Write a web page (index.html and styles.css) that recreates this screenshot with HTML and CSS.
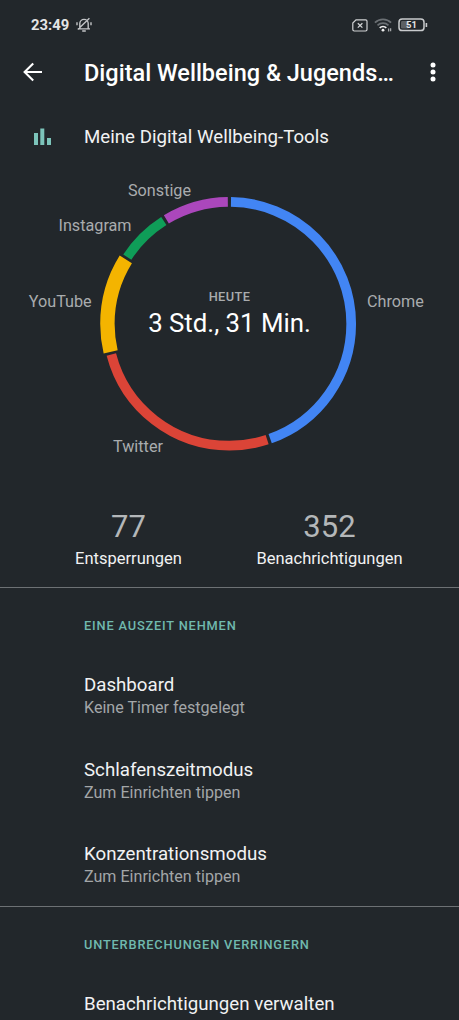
FILE: index.html
```html
<!DOCTYPE html>
<html lang="de">
<head>
<meta charset="utf-8">
<title>Digital Wellbeing</title>
<link rel="stylesheet" href="styles.css">
</head>
<body>
<div class="screen">
  <div class="status">
    <span class="time">23:49</span>
    <svg class="bell" width="16" height="16" viewBox="0 0 16 16" fill="none" stroke="#c3c5c7" stroke-width="1.4">
      <path d="M3.8 11.6V6.6a4.2 4.2 0 0 1 8.4 0v5M2 11.9h12M6.2 14h3.6M1 5.3v3M15 5.3v3M13.4 1.2 1.8 12.4"/>
    </svg>
    <span class="spacer"></span>
    <svg class="sim" width="16" height="13" viewBox="0 0 16 13" fill="none" stroke="#d0d2d4" stroke-width="1.2">
      <path d="M4 .8h9.6a1.4 1.4 0 0 1 1.4 1.4v8.4a1.4 1.4 0 0 1-1.4 1.4H2.2a1.4 1.4 0 0 1-1.4-1.4V4z"/>
      <path d="m5.8 4.2 4.6 4.4M10.4 4.2 5.8 8.6" stroke-width="1.3"/>
    </svg>
    <svg class="wifi" width="19" height="15" viewBox="0 0 19 15" fill="none">
      <path d="M.9 4.7a11.6 11.6 0 0 1 16.2 0M3.5 7.4a7.9 7.9 0 0 1 11 0" stroke="#6b7074" stroke-width="1.7"/>
      <path d="M5.7 9.8a4.8 4.8 0 0 1 6.6 0" stroke="#eee" stroke-width="1.7"/>
      <circle cx="9" cy="12.2" r="1.4" fill="#eee"/>
      <path d="M14.6 10.6v3M16.6 10.2v3" stroke="#a5a7a9" stroke-width="1.3"/>
    </svg>
    <svg class="battery" width="30" height="14" viewBox="0 0 30 14">
      <rect x="1" y="1" width="25" height="11.6" rx="3.2" fill="none" stroke="#c9cbcd" stroke-width="1.5"/>
      <rect x="3" y="3" width="8" height="7.6" rx="1.4" fill="#5c6063"/>
      <path d="M28.4 5v4" stroke="#c9cbcd" stroke-width="1.6"/>
      <text class="level" x="13.4" y="10.1" text-anchor="middle">51</text>
    </svg>
  </div>

  <header class="appbar">
    <svg class="back" width="20" height="20" viewBox="0 0 20 20" fill="none" stroke="#fff" stroke-width="2.1">
      <path d="M19 10H2M10.2 1.4 1.6 10l8.6 8.6"/>
    </svg>
    <h1 class="title">Digital Wellbeing &amp; Jugends…</h1>
    <svg class="more" width="6" height="20" viewBox="0 0 6 20" fill="#fff">
      <circle cx="3" cy="3" r="2.5"/><circle cx="3" cy="10" r="2.5"/><circle cx="3" cy="17" r="2.5"/>
    </svg>
  </header>

  <div class="tools">
    <svg class="bars" width="18" height="18" viewBox="0 0 18 18" fill="#7cc4ba">
      <path d="M0 5h4v12H0zM6.3.5h4V17h-4zM13 10h4v7h-4z"/>
    </svg>
    <span class="item-title">Meine Digital Wellbeing-Tools</span>
  </div>

  <svg class="chart" width="459" height="320" viewBox="0 160 459 320">
    <g fill="none" stroke-width="9.7" transform="rotate(-90 229.3 323.8)">
      <circle cx="229.3" cy="323.8" r="121.9" pathLength="360" stroke="#4285f4" stroke-dasharray="159.6 200.4" stroke-dashoffset="-.8"/>
      <circle cx="229.3" cy="323.8" r="121.9" pathLength="360" stroke="#db4437" stroke-dasharray="93.5 266.5" stroke-dashoffset="-161.9"/>
      <circle cx="229.3" cy="323.8" r="121.9" pathLength="360" stroke="#f4b400" stroke-width="14.4" stroke-dasharray="45.2 314.8" stroke-dashoffset="-256.7"/>
      <circle cx="229.3" cy="323.8" r="121.9" pathLength="360" stroke="#0f9d58" stroke-dasharray="24.3 335.7" stroke-dashoffset="-303.2"/>
      <circle cx="229.3" cy="323.8" r="121.9" pathLength="360" stroke="#ab47bc" stroke-dasharray="30.4 329.6" stroke-dashoffset="-328.9"/>
    </g>
    <g class="label">
      <text x="128" y="195.5">Sonstige</text>
      <text x="58.5" y="231">Instagram</text>
      <text x="28.8" y="307">YouTube</text>
      <text x="367" y="307">Chrome</text>
      <text x="113" y="452">Twitter</text>
    </g>
    <text class="today" x="229.5" y="300.6" text-anchor="middle">HEUTE</text>
    <text class="total" x="229.5" y="331.6" text-anchor="middle">3 Std., 31 Min.</text>
  </svg>

  <div class="stats">
    <div class="stat"><span class="num">77</span><span class="cap">Entsperrungen</span></div>
    <div class="stat"><span class="num">352</span><span class="cap">Benachrichtigungen</span></div>
  </div>

  <section class="section">
    <h2 class="heading">EINE AUSZEIT NEHMEN</h2>
    <div class="item"><span class="item-title">Dashboard</span><span class="item-sub">Keine Timer festgelegt</span></div>
    <div class="item"><span class="item-title">Schlafenszeitmodus</span><span class="item-sub">Zum Einrichten tippen</span></div>
    <div class="item"><span class="item-title">Konzentrationsmodus</span><span class="item-sub">Zum Einrichten tippen</span></div>
  </section>
  <section class="section">
    <h2 class="heading">UNTERBRECHUNGEN VERRINGERN</h2>
    <div class="item"><span class="item-title">Benachrichtigungen verwalten</span></div>
  </section>
</div>
</body>
</html>
```
FILE: styles.css
```css
* { box-sizing: border-box; }
body { margin: 0; background: #22272b; }
.screen {
  width: 459px;
  height: 1020px;
  overflow: hidden;
  background: #22272b;
  color: #f1f2f3;
  font-family: Roboto, sans-serif;
}
svg { display: block; flex: none; }
.status {
  display: flex;
  align-items: center;
  height: 50px;
  padding: 0 31px;
}
.time { font-size: 14.8px; font-weight: 700; color: #e4e5e6; }
.bell { margin-left: 7px; }
.spacer { flex: 1; }
.wifi { margin-left: 6px; }
.battery { margin-left: 5px; }
.level { font-size: 9.5px; font-weight: 700; fill: #e4e5e6; }
.appbar {
  display: flex;
  align-items: center;
  height: 43px;
  padding: 0 23px;
}
.title { margin: 0 auto 0 41px; padding-top: 3px; font-size: 23.5px; line-height: 28px; font-weight: 500; color: #fff; white-space: nowrap; }
.tools {
  display: flex;
  align-items: center;
  gap: 32px;
  height: 67px;
  padding: 20px 0 0 34px;
}
.item-title { font-size: 18.7px; line-height: 24px; white-space: nowrap; }
.label { font-size: 16.2px; fill: #a9acae; }
.today { font-size: 12.8px; font-weight: 500; letter-spacing: .4px; fill: #a9acae; }
.total { font-size: 25.8px; fill: #fff; }
.stats {
  display: grid;
  grid-template-columns: 201px 201px;
  height: 107px;
  padding: 29px 0 0 28px;
}
.stat { display: flex; flex-direction: column; align-items: center; }
.num { font-size: 31px; line-height: 36px; color: #b4b7b9; }
.cap { margin-top: 2px; font-size: 16.5px; line-height: 24px; }
.section {
  height: 319px;
  padding: 28px 0 0 84px;
  border-top: 1px solid #6d7174;
}
.heading { margin: 0 0 37px; font-size: 12.8px; line-height: 20px; font-weight: 500; letter-spacing: .83px; color: #70b9ae; white-space: nowrap; }
.item { display: flex; flex-direction: column; height: 84.5px; }
.item-sub { font-size: 16.1px; line-height: 22px; color: #a3a6a8; }
```
